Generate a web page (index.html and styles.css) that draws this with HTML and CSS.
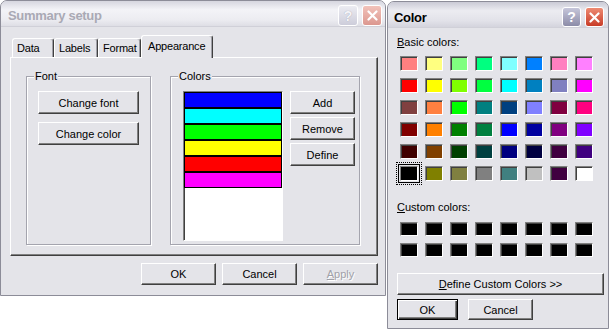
FILE: index.html
```html
<!DOCTYPE html>
<html lang="en">
<head>
    <meta charset="UTF-8">
    <title>Summary setup</title>
    <link rel="stylesheet" href="styles.css">
</head>
<body class="desk">

<!-- Summary setup dialog (inactive) -->
<div class="win summary">
    <div class="titlebar inactive">
        <span class="title">Summary setup</span>
        <span class="cap help">?</span>
        <span class="cap close"><svg width="11" height="11" viewBox="0 0 11 11"><path d="M1.5 1.5L9.5 9.5M9.5 1.5L1.5 9.5" stroke="#fff" stroke-width="2.2" stroke-linecap="round"/></svg></span>
    </div>
    <div class="win-body">
        <div class="tabs">
            <div class="tab tab-data">Data</div>
            <div class="tab tab-labels">Labels</div>
            <div class="tab tab-format">Format</div>
            <div class="tab tab-appearance active">Appearance</div>
        </div>
        <div class="tab-panel">
            <div class="group group-font">
                <span class="group-label">Font</span>
                <button class="btn btn-wide">Change font</button>
                <button class="btn btn-wide">Change color</button>
            </div>
            <div class="group group-colors">
                <span class="group-label">Colors</span>
                <div class="color-list">
                    <div class="color-row row-blue"></div>
                    <div class="color-row row-cyan"></div>
                    <div class="color-row row-green"></div>
                    <div class="color-row row-yellow"></div>
                    <div class="color-row row-red"></div>
                    <div class="color-row row-magenta"></div>
                </div>
                <div class="side-buttons">
                    <button class="btn btn-side">Add</button>
                    <button class="btn btn-side">Remove</button>
                    <button class="btn btn-side">Define</button>
                </div>
            </div>
        </div>
        <div class="dlg-buttons">
            <button class="btn btn-dlg">OK</button>
            <button class="btn btn-dlg">Cancel</button>
            <button class="btn btn-dlg" disabled><u>A</u>pply</button>
        </div>
    </div>
</div>

<!-- Color picker dialog -->
<div class="win color-dlg">
    <div class="titlebar">
        <span class="title">Color</span>
        <span class="cap help">?</span>
        <span class="cap close"><svg width="11" height="11" viewBox="0 0 11 11"><path d="M1.5 1.5L9.5 9.5M9.5 1.5L1.5 9.5" stroke="#fff" stroke-width="2.2" stroke-linecap="round"/></svg></span>
    </div>
    <div class="color-body">
        <div class="caption"><u>B</u>asic colors:</div>
        <div class="swatches basic">
            <span class="swatch" style="background:#ff8080"></span>
            <span class="swatch" style="background:#ffff80"></span>
            <span class="swatch" style="background:#80ff80"></span>
            <span class="swatch" style="background:#00ff80"></span>
            <span class="swatch" style="background:#80ffff"></span>
            <span class="swatch" style="background:#0080ff"></span>
            <span class="swatch" style="background:#ff80c0"></span>
            <span class="swatch" style="background:#ff80ff"></span>

            <span class="swatch" style="background:#ff0000"></span>
            <span class="swatch" style="background:#ffff00"></span>
            <span class="swatch" style="background:#80ff00"></span>
            <span class="swatch" style="background:#00ff40"></span>
            <span class="swatch" style="background:#00ffff"></span>
            <span class="swatch" style="background:#0080c0"></span>
            <span class="swatch" style="background:#8080c0"></span>
            <span class="swatch" style="background:#ff00ff"></span>

            <span class="swatch" style="background:#804040"></span>
            <span class="swatch" style="background:#ff8040"></span>
            <span class="swatch" style="background:#00ff00"></span>
            <span class="swatch" style="background:#008080"></span>
            <span class="swatch" style="background:#004080"></span>
            <span class="swatch" style="background:#8080ff"></span>
            <span class="swatch" style="background:#800040"></span>
            <span class="swatch" style="background:#ff0080"></span>

            <span class="swatch" style="background:#800000"></span>
            <span class="swatch" style="background:#ff8000"></span>
            <span class="swatch" style="background:#008000"></span>
            <span class="swatch" style="background:#008040"></span>
            <span class="swatch" style="background:#0000ff"></span>
            <span class="swatch" style="background:#0000a0"></span>
            <span class="swatch" style="background:#800080"></span>
            <span class="swatch" style="background:#8000ff"></span>

            <span class="swatch" style="background:#400000"></span>
            <span class="swatch" style="background:#804000"></span>
            <span class="swatch" style="background:#004000"></span>
            <span class="swatch" style="background:#004040"></span>
            <span class="swatch" style="background:#000080"></span>
            <span class="swatch" style="background:#000040"></span>
            <span class="swatch" style="background:#400040"></span>
            <span class="swatch" style="background:#400080"></span>

            <span class="swatch selected" style="background:#000000"></span>
            <span class="swatch" style="background:#808000"></span>
            <span class="swatch" style="background:#808040"></span>
            <span class="swatch" style="background:#808080"></span>
            <span class="swatch" style="background:#408080"></span>
            <span class="swatch" style="background:#c0c0c0"></span>
            <span class="swatch" style="background:#400040"></span>
            <span class="swatch" style="background:#ffffff"></span>
        </div>

        <div class="caption caption-custom"><u>C</u>ustom colors:</div>
        <div class="swatches custom">
            <span class="swatch"></span><span class="swatch"></span><span class="swatch"></span><span class="swatch"></span>
            <span class="swatch"></span><span class="swatch"></span><span class="swatch"></span><span class="swatch"></span>
            <span class="swatch"></span><span class="swatch"></span><span class="swatch"></span><span class="swatch"></span>
            <span class="swatch"></span><span class="swatch"></span><span class="swatch"></span><span class="swatch"></span>
        </div>

        <button class="btn btn-define"><u>D</u>efine Custom Colors &gt;&gt;</button>
        <div class="color-actions">
            <button class="btn btn-ok default">OK</button>
            <button class="btn btn-cancel">Cancel</button>
        </div>
    </div>
</div>

</body>
</html>
```

FILE: styles.css
```css
* {
    box-sizing: border-box;
}

.desk {
    margin: 0;
    width: 610px;
    height: 332px;
    overflow: hidden;
    background: #fff;
    display: flex;
    align-items: flex-start;
    font: 11px "Liberation Sans", Arial, sans-serif;
    color: #000;
}

/* Window frame */
.win {
    background: #e4e4e9;
    border: 1px solid #8c8c98;
    border-radius: 7px 7px 0 0;
    display: flex;
    flex-direction: column;
}

.summary {
    width: 386px;
    height: 296px;
}

.color-dlg {
    width: 222px;
    height: 328px;
    margin: 1px 0 0 1px;
}

.titlebar {
    height: 26px;
    flex: none;
    display: flex;
    align-items: flex-start;
    gap: 4px;
    padding: 4px 3px 0 7px;
    border-radius: 6px 6px 0 0;
    border-bottom: 1px solid #d0d0d8;
    background: linear-gradient(#cacad5, #ececf1 35%, #e2e2e9 75%, #d4d4dd);
}

.titlebar.inactive {
    background: linear-gradient(#d6d6df, #f3f3f7 35%, #ececf1 75%, #dedee5);
}

.title {
    flex: 1;
    padding-top: 3px;
    font: bold 13px "Liberation Sans", Arial, sans-serif;
    letter-spacing: -0.3px;
}

.inactive .title {
    color: #a9a9b4;
}

.cap {
    width: 20px;
    height: 21px;
    flex: none;
    display: flex;
    align-items: center;
    justify-content: center;
    border: 1px solid #fff;
    border-radius: 3px;
    font: bold 14px "Liberation Sans", Arial, sans-serif;
    color: #fff;
}

.cap.help {
    background: linear-gradient(#c6c6da, #8c8ca8);
}

.cap.close {
    background: linear-gradient(#ee8a72, #c83c28);
}

.inactive .cap.help {
    background: linear-gradient(#ececf2, #cdcdda);
    color: #f4f4f8;
    text-shadow: 0 0 1px #9a9aaa;
}

.inactive .cap.close {
    background: linear-gradient(#f2c2ba, #dc9890);
}

.color-dlg .titlebar {
    padding: 5px 4px 0 6px;
}

.color-dlg .cap {
    width: 19px;
    height: 20px;
}

/* Classic 3D controls */
.btn {
    height: 23px;
    padding: 0;
    border: 1px solid;
    border-color: #fff #404040 #404040 #fff;
    box-shadow: inset -1px -1px #808080;
    background: #e4e4e9;
    font: 11px "Liberation Sans", Arial, sans-serif;
    color: #000;
}

.btn:disabled {
    color: #a0a0a8;
    text-shadow: 1px 1px #fff;
}

.btn.default {
    border-color: #000;
    box-shadow: inset 1px 1px #fff, inset -1px -1px #404040, inset -2px -2px #808080;
}

/* Summary setup body */
.win-body {
    flex: 1;
    padding: 8px 7px 0 9px;
}

.tabs {
    display: flex;
    align-items: flex-end;
    height: 22px;
    margin-left: 2px;
}

.tab {
    height: 19px;
    padding: 3px 0 0 4px;
    border: 1px solid;
    border-bottom: none;
    border-color: #fff #404040 #fff #fff;
    border-radius: 3px 3px 0 0;
    box-shadow: inset -1px 0 #a0a0a8;
    background: #e4e4e9;
    letter-spacing: -0.2px;
    white-space: nowrap;
}

.tab-data { width: 42px; }
.tab-labels { width: 44px; }
.tab-format { width: 43px; }
.tab-appearance { width: 72px; }

.tab.active {
    height: 23px;
    margin-bottom: -1px;
    padding-top: 4px;
    padding-left: 6px;
    position: relative;
    z-index: 1;
}

.tab-panel {
    height: 199px;
    display: flex;
    align-items: flex-start;
    gap: 19px;
    padding: 18px 0 0 15px;
    border: 1px solid;
    border-color: #fff #404040 #404040 #fff;
    box-shadow: inset -1px -1px #808080;
}

.group {
    height: 169px;
    position: relative;
    border: 1px solid #a4a4ae;
    box-shadow: inset 1px 1px #fff, 1px 1px #fff;
}

.group-label {
    position: absolute;
    top: -7px;
    left: 7px;
    padding: 0 1px;
    line-height: 13px;
    background: #e4e4e9;
}

.group-font {
    width: 125px;
    display: flex;
    flex-direction: column;
    gap: 8px;
    padding: 14px 0 0 11px;
}

.btn-wide {
    width: 101px;
}

.group-colors {
    width: 190px;
    display: flex;
    align-items: flex-start;
    gap: 7px;
    padding: 14px 0 0 12px;
}

.color-list {
    width: 100px;
    height: 150px;
    border: 1px solid;
    border-color: #808080 #fff #fff #808080;
    box-shadow: inset 1px 1px #404040;
    background: #fff;
}

.color-row {
    height: 16px;
    border: 1px solid #000;
}

.row-blue { background: #0000ff; }
.row-cyan { background: #00ffff; }
.row-green { background: #00ff00; }
.row-yellow { background: #ffff00; }
.row-red { background: #ff0000; }
.row-magenta { background: #ff00ff; }

.side-buttons {
    display: flex;
    flex-direction: column;
    gap: 3px;
}

.btn-side {
    width: 65px;
}

.dlg-buttons {
    display: flex;
    justify-content: flex-end;
    gap: 6px;
    margin-top: 7px;
}

.btn-dlg {
    width: 75px;
    height: 22px;
}

/* Color dialog body */
.color-body {
    flex: 1;
    padding: 8px 0 0 9px;
}

.caption {
    line-height: 13px;
}

.caption-custom {
    margin-top: 20px;
}

.swatches {
    display: grid;
    grid-template-columns: repeat(8, 18px);
    gap: 7px;
    margin-left: 3px;
}

.swatches.basic {
    grid-auto-rows: 15px;
    margin-top: 7px;
}

.swatches.custom {
    grid-auto-rows: 14px;
    margin-top: 8px;
}

.swatch {
    border: 1px solid;
    border-color: #808080 #fff #fff #808080;
    box-shadow: inset 1px 1px #404040;
    background: #000;
}

.swatch.selected {
    box-shadow: 0 0 0 1px #e4e4e9, 0 0 0 2px #000;
    outline: 1px dotted #000;
    outline-offset: 3px;
}

.btn-define {
    display: block;
    width: 207px;
    height: 22px;
    margin-top: 16px;
}

.color-actions {
    display: flex;
    gap: 10px;
    margin-top: 4px;
}

.btn-ok {
    width: 61px;
    height: 21px;
}

.btn-cancel {
    width: 65px;
    height: 21px;
}
```
